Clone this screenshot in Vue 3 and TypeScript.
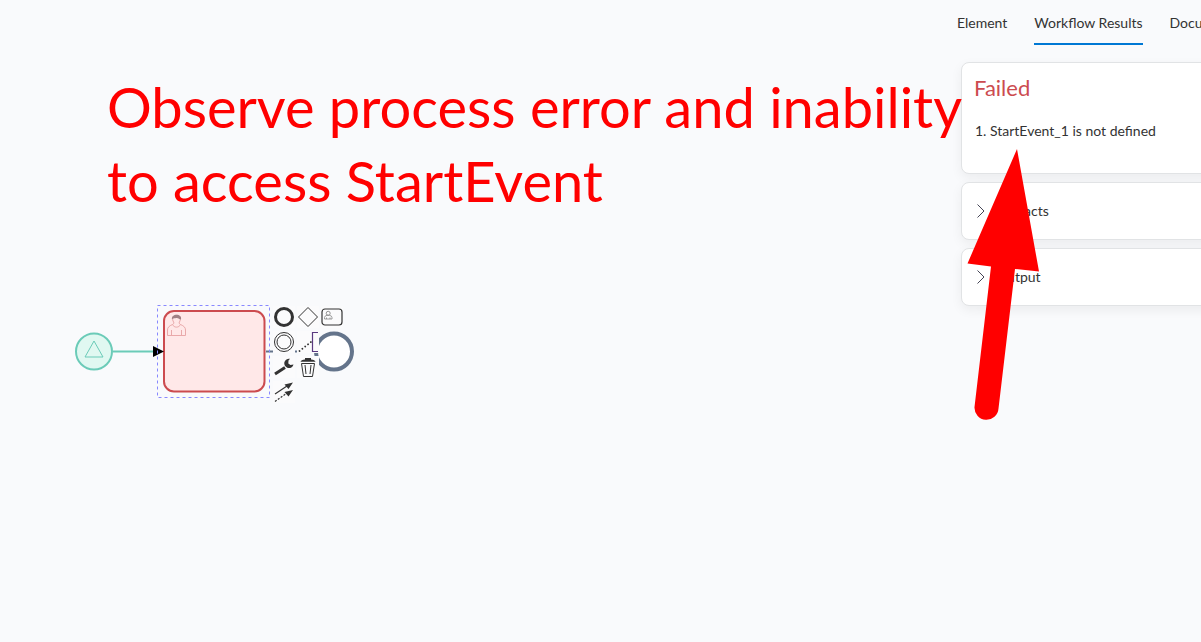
<script setup lang="ts">
import { ref } from 'vue'

interface Section {
  title: string
  open: boolean
}

const tabs: string[] = ['Element', 'Workflow Results', 'Documentation']
const activeTab = ref<string>('Workflow Results')
const errors: string[] = ['StartEvent_1 is not defined']
const sections = ref<Section[]>([
  { title: 'Artifacts', open: false },
  { title: 'Output', open: false },
])
</script>

<template>
  <div class="page">
    <main class="canvas">
      <svg class="diagram" width="380" height="420" viewBox="0 0 380 420" aria-label="Process diagram">
        <circle cx="94" cy="351.5" r="18" fill="#e0f8f1" stroke="#6bcbb8" stroke-width="2" />
        <path d="M94 341 L103 357 H85 Z" fill="none" stroke="#6bcbb8" stroke-width="1" />
        <path d="M113 351.5 H155" stroke="#6bcbb8" stroke-width="2" />
        <path d="M266 351.5 H316" stroke="#64748b" stroke-width="2" />
        <rect x="164" y="311" width="100.5" height="80.5" rx="10" fill="#ffe8e8" stroke="#cc4b4f" stroke-width="2" />
        <g fill="none" stroke="#e9a9aa" stroke-width="1">
          <path d="M172.500 324.500 C169 326 167.500 327.500 167.500 330 V335.500 H185.500 V330 C185.500 327.500 184 326 180.500 324.500 C179 328 174 328 172.500 324.500 Z" />
          <path d="M171.500 330 V335 M181.500 330 V335" />
          <path d="M172.500 324.500 C174.500 323.500 174 322.500 173 321 C170.500 313.500 182.500 313.500 180 321 C179 322.500 178.500 323.500 180.500 324.500" />
        </g>
        <path d="M172 319.500 C170.500 313.500 182.500 313 181 319.500 C179 319.500 178.500 317.500 176 318 C174.500 318.500 173.500 317.500 172 319.500 Z" fill="#a08084" />
        <path d="M153 346 L164 351.500 L153 357 Z" fill="#000" />
        <circle cx="334" cy="351.5" r="18" fill="#fff" stroke="#64748b" stroke-width="4" />
        <rect x="157.5" y="305.5" width="112" height="92" fill="none" stroke="#8888ff" stroke-width="1" stroke-dasharray="3 3" />
      </svg>

      <div class="pad">
        <button type="button" aria-label="Append end event">
          <svg viewBox="0 0 22 22"><circle cx="11" cy="11" r="8.500" stroke-width="3" /></svg>
        </button>
        <button type="button" aria-label="Append gateway">
          <svg viewBox="0 0 22 22"><path d="M11 1.500 L20.500 11 L11 20.500 L1.500 11 Z" stroke-width="1" /></svg>
        </button>
        <button type="button" aria-label="Append user task">
          <svg viewBox="0 0 22 22">
            <rect x="1" y="3" width="20" height="16" rx="3" stroke-width="1.200" />
            <path d="M3.500 13 V11.500 Q3.500 9.800 6 9.300 H8.500 Q11 9.800 11 11.500 V13 Z M5.500 11.500 V13 M9 11.500 V13" stroke="#888" stroke-width="0.800" />
            <circle cx="7.200" cy="7.300" r="2" stroke="#888" stroke-width="0.900" />
          </svg>
        </button>
        <button type="button" aria-label="Append intermediate event">
          <svg viewBox="0 0 22 22"><circle cx="11" cy="11" r="9.500" stroke-width="1" /><circle cx="11" cy="11" r="7" stroke-width="1" /></svg>
        </button>
        <button type="button" aria-label="Append text annotation">
          <svg viewBox="0 0 22 22">
            <path d="M21 1.500 H15.500 V20.500 H21" stroke="#5a3a80" />
            <path d="M2.500 20 L14 11" stroke-width="1.800" stroke-dasharray="0.100 3.500" stroke-linecap="round" />
          </svg>
        </button>
        <span></span>
        <button type="button" aria-label="Change type">
          <svg viewBox="0 0 22 22">
            <path d="M2 18 L12 11.500" stroke-width="3" />
            <path d="M20.500 8.500 A4.700 4.700 0 1 1 17 2.800 L15.500 4.500 L15.300 7.500 L17.500 9 Z" fill="#333" stroke="none" />
          </svg>
        </button>
        <button type="button" aria-label="Remove">
          <svg viewBox="0 0 22 22">
            <path d="M4.500 7.500 L6.500 20.500 H15.500 L17.500 7.500 Z M8 9 L9 18 M14 9 L13 18" stroke-width="1" />
            <path d="M3.500 5.800 Q4 4 8 3.500 V2 H14 V3.500 Q18 4 18.500 5.800 Z" fill="#333" stroke="none" />
          </svg>
        </button>
        <span></span>
        <button type="button" aria-label="Connect">
          <svg viewBox="0 0 22 22">
            <path d="M2 13 L14 5" />
            <path d="M2 20.500 L14 12" stroke-dasharray="2 1.500" />
            <path d="M20 1.500 L15.500 8 L11.500 3.500 Z M20 9 L15.500 15.500 L11.500 11 Z" fill="#333" stroke="none" />
          </svg>
        </button>
      </div>

      <h1 class="note">Observe process error and inability<br />to access StartEvent</h1>
    </main>

    <aside class="panel">
      <nav class="tabs">
        <button
          v-for="tab in tabs"
          :key="tab"
          type="button"
          class="tab"
          :class="{ active: tab === activeTab }"
          @click="activeTab = tab"
        >{{ tab }}</button>
      </nav>
      <div class="cards">
        <section class="card result">
          <h2>Failed</h2>
          <ol>
            <li v-for="error in errors" :key="error">{{ error }}</li>
          </ol>
        </section>
        <section v-for="section in sections" :key="section.title" class="card">
          <button type="button" class="toggle" :aria-expanded="section.open" @click="section.open = !section.open">
            <svg width="8" height="14" viewBox="0 0 8 14"><path d="M0.500 0.500 L7 7 L0.500 13.500" /></svg>
            <span>{{ section.title }}</span>
          </button>
        </section>
      </div>
      <svg class="pointer" width="72" height="272" viewBox="0 0 72 272" aria-hidden="true">
        <path d="M50 0 L72 122.500 L48 120 L31.500 259.500 A12 12 0 0 1 7.500 258 L24 117.500 L0.500 114.500 Z" />
      </svg>
    </aside>
  </div>
</template>

<style>
body {
  margin: 0;
  background: #f9fafc;
}
</style>

<style scoped>
.page {
  display: flex;
  min-height: 100vh;
  overflow: hidden;
  background: #f9fafc;
  color: #333;
  font: 14px/20px Lato, "Liberation Sans", sans-serif;
}
button {
  padding: 0;
  border: 0;
  background: none;
  color: inherit;
  font: inherit;
  cursor: pointer;
}
.canvas {
  position: relative;
  z-index: 1;
  flex: 1;
  min-width: 0;
}
.diagram {
  display: block;
}
.pad {
  position: absolute;
  left: 273px;
  top: 306px;
  display: grid;
  grid-template-columns: repeat(3, 22px);
  grid-auto-rows: 22px;
  gap: 3px 2px;
}
.pad button {
  background: #fbfbfc;
}
.pad svg {
  display: block;
  width: 22px;
  height: 22px;
  fill: none;
  stroke: #333;
  stroke-width: 1.2;
}
.note {
  position: absolute;
  left: 107px;
  top: 70px;
  margin: 0;
  color: #f00;
  font-size: 56px;
  line-height: 74px;
  font-weight: 400;
  white-space: nowrap;
}
.panel {
  position: relative;
  flex: 0 0 256px;
  overflow: hidden;
}
.tabs {
  display: flex;
  gap: 27px;
  padding-left: 12px;
}
.tab {
  padding: 13px 0 10px;
  border-bottom: 2px solid transparent;
  white-space: nowrap;
}
.tab.active {
  border-color: #0078d4;
}
.cards {
  display: grid;
  gap: 8px;
  width: 360px;
  padding: 17px 16px;
}
.card {
  border: 1px solid #e1e3e5;
  border-radius: 8px;
  background: #fff;
  box-shadow: 0 4px 12px rgba(0, 0, 0, 0.06);
}
.result {
  padding: 11px 12px 32px;
}
h2 {
  margin: 0 0 19px;
  color: #cc4b4f;
  font-size: 22px;
  line-height: 28px;
  font-weight: 400;
}
ol {
  margin: 0;
  padding-left: 16px;
}
.toggle {
  display: flex;
  align-items: center;
  gap: 11px;
  width: 100%;
  padding: 18px 15px;
}
.toggle svg {
  fill: none;
  stroke: #445;
}
.pointer {
  position: absolute;
  left: 22px;
  top: 149px;
  fill: #f00;
}
</style>
